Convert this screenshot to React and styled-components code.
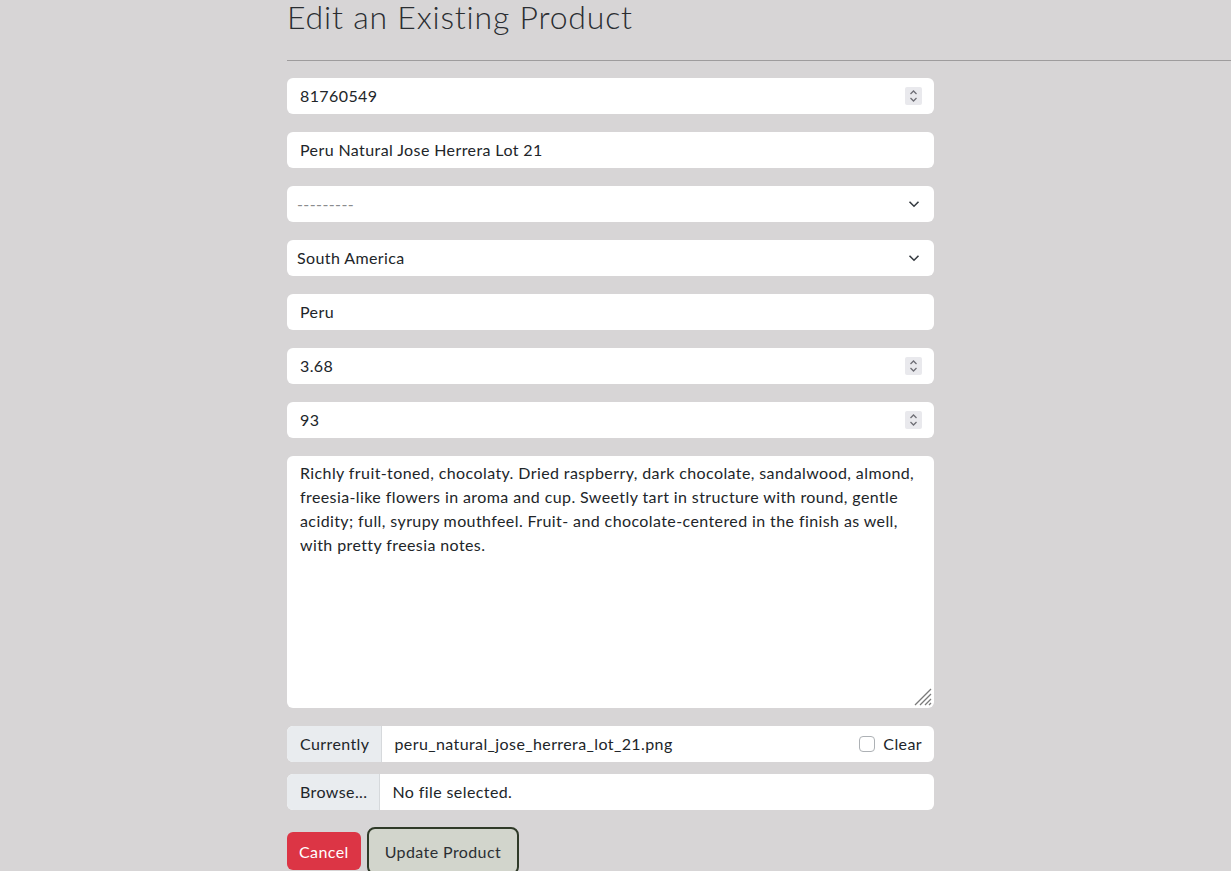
import React from "react";
import styled, { createGlobalStyle } from "styled-components";

const GlobalStyle = createGlobalStyle`
  body {
    margin: 0;
    background: #d7d5d6;
    font-family: Lato, "Noto Sans", sans-serif;
    color: #212529;
    letter-spacing: 0.4px;
    overflow: hidden;
  }
`;

const Page = styled.div`
  padding-left: 287px;
  width: 944px;
`;

const Title = styled.h1`
  margin: 0;
  font-size: 32px;
  font-weight: 300;
  line-height: 34px;
  color: #2a2d31;
  letter-spacing: 0.8px;
`;

const Rule = styled.hr`
  margin: 26px 0 17px;
  border: 0;
  border-top: 1px solid #9e9c9d;
`;

const Form = styled.form`
  width: 647px;
  display: flex;
  flex-direction: column;
  gap: 18px;
`;

const Field = styled.div`
  display: flex;
  align-items: center;
  height: 36px;
  background: #fff;
  border-radius: 6px;
  padding: 0 12px 1px 13px;
  box-sizing: border-box;
`;

const Text = styled.input`
  flex: 1;
  border: 0;
  outline: 0;
  padding: 0;
  background: transparent;
  font: inherit;
  font-size: 16px;
  letter-spacing: 0.4px;
  color: #212529;
  margin-left: ${(p) => (p.$shift ? "-3px" : "0")};
  &::placeholder {
    color: #8a8c8e;
  }
`;

const Spinner = styled.div`
  width: 17px;
  height: 18px;
  background: #e9e9ed;
  border-radius: 2px;
  display: flex;
  align-items: center;
  justify-content: center;
`;

const Chevron = styled.div`
  display: flex;
  margin-right: 2px;
`;

const AreaWrap = styled.div`
  position: relative;
  display: flex;
`;

const Area = styled.textarea`
  flex: 1;
  height: 252px;
  border: 0;
  outline: 0;
  border-radius: 6px;
  padding: 5px 12px 6px 13px;
  box-sizing: border-box;
  font: inherit;
  font-size: 16px;
  line-height: 24px;
  letter-spacing: 0.4px;
  color: #212529;
  resize: none;
`;

const Grip = styled.svg`
  position: absolute;
  right: 2px;
  bottom: 2px;
  pointer-events: none;
`;

const Group = styled.div`
  display: flex;
  flex-direction: column;
  gap: 12px;
`;

const FileRow = styled.div`
  display: flex;
  height: 36px;
  background: #fff;
  border-radius: 6px;
  overflow: hidden;
  font-size: 16px;
`;

const Addon = styled.div`
  display: flex;
  align-items: center;
  padding: 0 12px 1px 13px;
  background: #e9ecef;
  border-right: 1px solid #d6d9dc;
  color: #212529;
`;

const FileName = styled.div`
  flex: 1;
  display: flex;
  align-items: center;
  padding: 0 12px 1px;
`;

const ClearLabel = styled.label`
  display: flex;
  align-items: center;
  gap: 8px;
  padding: 0 12px 1px 0;
`;

const Box = styled.span`
  width: 14px;
  height: 14px;
  border: 1px solid #adb1b5;
  border-radius: 4px;
  background: #fff;
`;

const Actions = styled.div`
  display: flex;
  align-items: flex-start;
  gap: 6px;
  margin-top: -1px;
`;

const Button = styled.button`
  font: inherit;
  font-size: 16px;
  letter-spacing: 0.4px;
  height: ${(p) => (p.$primary ? "48px" : "38px")};
  margin-top: ${(p) => (p.$primary ? "0" : "5px")};
  padding: 0 ${(p) => (p.$primary ? "16px" : "12px")};
  border-radius: ${(p) => (p.$primary ? "8px" : "6px")};
  border: ${(p) => (p.$primary ? "2px solid #2f3a28" : "0")};
  background: ${(p) => (p.$primary ? "#d2d5cc" : "#dc3545")};
  color: ${(p) => (p.$primary ? "#2b2f33" : "#fff")};
`;

const SpinIcon = () => (
  <Spinner>
    <svg width="9" height="14" viewBox="0 0 9 14" fill="none" stroke="#6f6f76" strokeWidth="1.3">
      <path d="M1.5 5 L4.5 2 L7.5 5" />
      <path d="M1.5 9 L4.5 12 L7.5 9" />
    </svg>
  </Spinner>
);

const DownIcon = () => (
  <Chevron>
    <svg width="12" height="8" viewBox="0 0 12 8" fill="none" stroke="#343a40" strokeWidth="1.6">
      <path d="M1.5 1.8 L6 6.2 L10.5 1.8" />
    </svg>
  </Chevron>
);

const NumberField = ({ value }) => (
  <Field>
    <Text defaultValue={value} />
    <SpinIcon />
  </Field>
);

const SelectField = ({ value, placeholder }) => (
  <Field>
    <Text $shift defaultValue={value} placeholder={placeholder} readOnly />
    <DownIcon />
  </Field>
);

export default function App() {
  return (
    <Page>
      <GlobalStyle />
      <Title>Edit an Existing Product</Title>
      <Rule />
      <Form>
        <NumberField value="81760549" />
        <Field>
          <Text defaultValue="Peru Natural Jose Herrera Lot 21" />
        </Field>
        <SelectField placeholder="---------" />
        <SelectField value="South America" />
        <Field>
          <Text defaultValue="Peru" />
        </Field>
        <NumberField value="3.68" />
        <NumberField value="93" />
        <AreaWrap>
          <Area defaultValue="Richly fruit-toned, chocolaty. Dried raspberry, dark chocolate, sandalwood, almond, freesia-like flowers in aroma and cup. Sweetly tart in structure with round, gentle acidity; full, syrupy mouthfeel. Fruit- and chocolate-centered in the finish as well, with pretty freesia notes." />
          <Grip width="18" height="18" viewBox="0 0 18 18" stroke="#7a7a7a" strokeWidth="1.3">
            <path d="M1 17 L17 1 M6 17 L17 6 M11 17 L17 11 M15 17 L17 15" />
          </Grip>
        </AreaWrap>
        <Group>
          <FileRow>
            <Addon>Currently</Addon>
            <FileName>peru_natural_jose_herrera_lot_21.png</FileName>
            <ClearLabel>
              <Box />
              Clear
            </ClearLabel>
          </FileRow>
          <FileRow>
            <Addon>Browse...</Addon>
            <FileName>No file selected.</FileName>
          </FileRow>
        </Group>
        <Actions>
          <Button type="button">Cancel</Button>
          <Button type="button" $primary>Update Product</Button>
        </Actions>
      </Form>
    </Page>
  );
}
